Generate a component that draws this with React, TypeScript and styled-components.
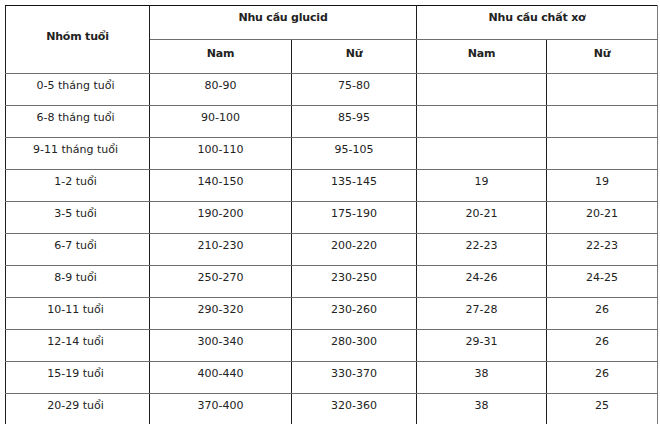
import styled, { createGlobalStyle } from "styled-components";

const GlobalStyle = createGlobalStyle`
  html, body {
    margin: 0;
    padding: 0;
    background: #fff;
    overflow: hidden;
  }
  body {
    font-family: "DejaVu Sans", Verdana, sans-serif;
    color: #222;
  }
`;

const Page = styled.div`
  padding: 5px 0 0 5px;
`;

const Table = styled.table`
  width: 652px;
  border-collapse: collapse;
  table-layout: fixed;
  font-size: 11px;
  line-height: 14px;
`;

const Th = styled.th<{ $pad?: number }>`
  font-weight: bold;
  text-align: center;
  vertical-align: top;
  padding: ${(p) => p.$pad ?? 6}px 2px 0;
  height: ${(p) => 33 - (p.$pad ?? 6)}px;
  border-top: 1px solid #6e6e6e;
  border-bottom: 1px solid #6e6e6e;
  border-left: 1px solid #1e1e1e;
  border-right: 1px solid #1e1e1e;
  letter-spacing: -0.2px;

  &:last-child {
    border-right-color: #7a7a7a;
  }
`;

const TopRow = styled.tr`
  th {
    border-top-color: #111;
  }
`;

const AgeHead = styled(Th)`
  vertical-align: middle;
  padding: 0 2px 6px;
`;

const Td = styled.td`
  text-align: center;
  vertical-align: top;
  padding: 5px 2px 0;
  height: 26px;
  border-top: 1px solid #6e6e6e;
  border-bottom: 1px solid #6e6e6e;
  border-left: 1px solid #1e1e1e;
  border-right: 1px solid #1e1e1e;
  white-space: nowrap;

  &:first-child {
    padding-right: 6px;
  }

  &:last-child {
    border-right-color: #7a7a7a;
  }
`;

type Row = [string, string, string, string, string];

const rows: Row[] = [
  ["0-5 tháng tuổi", "80-90", "75-80", "", ""],
  ["6-8 tháng tuổi", "90-100", "85-95", "", ""],
  ["9-11 tháng tuổi", "100-110", "95-105", "", ""],
  ["1-2 tuổi", "140-150", "135-145", "19", "19"],
  ["3-5 tuổi", "190-200", "175-190", "20-21", "20-21"],
  ["6-7 tuổi", "210-230", "200-220", "22-23", "22-23"],
  ["8-9 tuổi", "250-270", "230-250", "24-26", "24-25"],
  ["10-11 tuổi", "290-320", "230-260", "27-28", "26"],
  ["12-14 tuổi", "300-340", "280-300", "29-31", "26"],
  ["15-19 tuổi", "400-440", "330-370", "38", "26"],
  ["20-29 tuổi", "370-400", "320-360", "38", "25"],
  ["", "", "", "", ""],
];

const widths = [144, 142, 125, 130, 111];

export default function App() {
  return (
    <Page>
      <GlobalStyle />
      <Table>
        <colgroup>
          {widths.map((w, i) => (
            <col key={i} style={{ width: w }} />
          ))}
        </colgroup>
        <thead>
          <TopRow>
            <AgeHead rowSpan={2}>Nhóm tuổi</AgeHead>
            <Th colSpan={2} $pad={5}>
              Nhu cầu glucid
            </Th>
            <Th colSpan={2} $pad={5}>
              Nhu cầu chất xơ
            </Th>
          </TopRow>
          <tr>
            <Th $pad={7}>Nam</Th>
            <Th $pad={7}>Nữ</Th>
            <Th $pad={7}>Nam</Th>
            <Th $pad={7}>Nữ</Th>
          </tr>
        </thead>
        <tbody>
          {rows.map((r, i) => (
            <tr key={i}>
              {r.map((c, j) => (
                <Td key={j}>{c}</Td>
              ))}
            </tr>
          ))}
        </tbody>
      </Table>
    </Page>
  );
}
